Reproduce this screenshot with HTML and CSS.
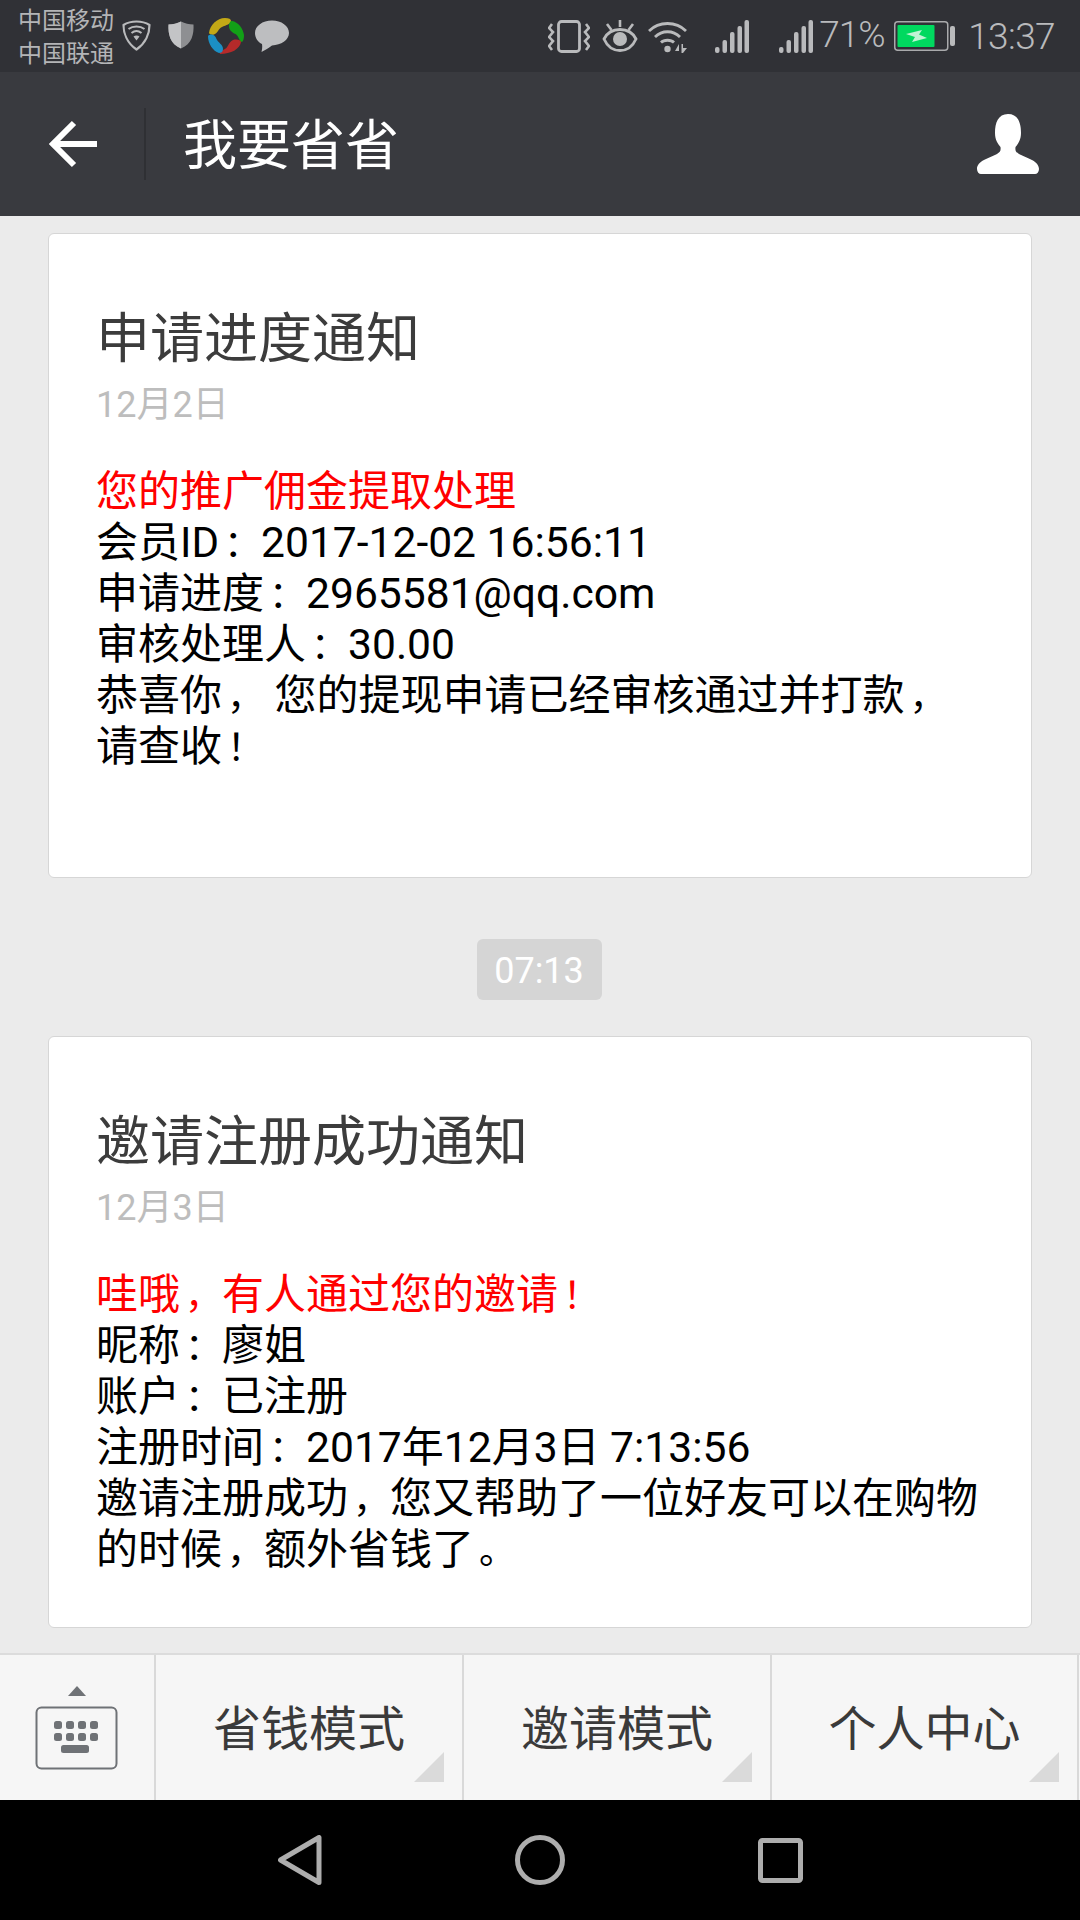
FILE: index.html
```html
<!DOCTYPE html>
<html lang="zh-CN">
<head>
<meta charset="utf-8">
<title>我要省省</title>
<link rel="stylesheet" href="styles.css">
</head>
<body>
<div class="phone">
  <div class="status">
    <div class="carriers"><span>中国移动</span><span>中国联通</span></div>
    <svg class="ic-guard" viewBox="0 0 29 31"><path d="M14.5 1.5C19 1.5 23.500 2.500 27.500 5C27.500 13 24 23 14.500 29.500C5 23 1.500 13 1.500 5C5.500 2.500 10 1.500 14.500 1.500Z" fill="none" stroke="#b9babc" stroke-width="2.200"/><path d="M6.500 9C11 5.500 18 5.500 22.500 9M9.500 13C12.500 10.500 16.500 10.500 19.500 13" fill="none" stroke="#b9babc" stroke-width="2"/><path d="M11.500 16.500C13 15 16 15 17.500 16.500L14.500 20.500Z" fill="#b9babc"/></svg>
    <svg class="ic-shield" viewBox="0 0 26 28"><path d="M13 0.500C17 2.500 21 3.500 25.500 3.500C26 13 24 23 13 27.500C2 23 0 13 0.500 3.500C5 3.500 9 2.500 13 0.500Z" fill="#8e8f92"/><path d="M13 0.500C9 2.500 5 3.500 0.500 3.500C0 13 2 23 13 27.500Z" fill="#c3c4c6"/></svg>
    <svg class="ic-petals" viewBox="0 0 36 36"><path d="M1 15C2 7 9 0 17 0C21 0 23 1 23 3C23 6 18 7 14 9C10 11 10 15 6 16.500C4 17 1.500 16.500 1 15Z" fill="#c3a816"/><path d="M24 3C30 4 35 10 36 17C36 21 35 24 33.500 24C31 23 31 18 27.500 16C24 14.500 21 12 21 8C21 5 22 3 24 3Z" fill="#12a017"/><path d="M33 24C32 31 23 36 12 36C11 35 12 33 15 32C21 30 20 24 25 22C29 21 33 22 33 24Z" fill="#b52a2a"/><path d="M0 18C2 15.500 7 16 8.500 21C10 25 15 26 15 31C15 34 13 35 11 35C5 33 0 26 0 18Z" fill="#1b8fc4"/></svg>
    <svg class="ic-bubble" viewBox="0 0 34 32"><path d="M17 0.500C26.500 0.500 34 6 34 13C34 20 26 25 17 25.500C14 28 10 30 6.500 32C7 29.500 7.500 27 7 24C3 22 0 18 0 13C0 6 7.500 0.500 17 0.500Z" fill="#bdbec0"/></svg>
    <div class="status-spacer"></div>
    <svg class="ic-vibrate" viewBox="0 0 42 33"><rect x="10.500" y="1.500" width="21" height="30" rx="3" fill="none" stroke="#b9babc" stroke-width="2.800"/><path d="M4 4L1 8L5 12L1 17L5 21L1 26L4 30" fill="none" stroke="#b9babc" stroke-width="2.600"/><path d="M38 4L41 8L37 12L41 17L37 21L41 26L38 30" fill="none" stroke="#b9babc" stroke-width="2.600"/></svg>
    <svg class="ic-eye" viewBox="0 0 36 32"><path d="M2 19C6 11 12 9.500 18 9.500C24 9.500 30 11 34 19C30 28 24 30.500 18 30.500C12 30.500 6 28 2 19Z" fill="none" stroke="#b9babc" stroke-width="2.800"/><circle cx="18" cy="19" r="7" fill="#b9babc"/><path d="M18 0V7M5 4L9.500 10M31 4L26.500 10" stroke="#b9babc" stroke-width="2.600"/></svg>
    <svg class="ic-wifi" viewBox="0 0 39 33"><path d="M1 11C11 1 28 1 38 11M7 17C14 10 25 10 32 17M13 22.500C16 19.500 23 19.500 26 22.500" fill="none" stroke="#b9babc" stroke-width="2.800"/><circle cx="19.500" cy="29" r="3.200" fill="#b9babc"/><path d="M27 31L31 24V31ZM33.500 24H35V28H39L35 33H33.500Z" fill="#b9babc"/></svg>
    <svg class="ic-signal" viewBox="0 0 34 33"><rect x="0" y="27" width="4.500" height="6" rx="2" fill="#b9babc"/><rect x="7.500" y="20" width="4.500" height="13" rx="2" fill="#b9babc"/><rect x="15" y="12" width="4.500" height="21" rx="2" fill="#b9babc"/><rect x="22.500" y="6" width="4.500" height="27" rx="2" fill="#b9babc"/><rect x="29.500" y="0" width="4.500" height="33" rx="2" fill="#b9babc"/></svg>
    <svg class="ic-signal ic-signal2" viewBox="0 0 34 33"><rect x="0" y="27" width="4.500" height="6" rx="2" fill="#b9babc"/><rect x="7.500" y="20" width="4.500" height="13" rx="2" fill="#b9babc"/><rect x="15" y="12" width="4.500" height="21" rx="2" fill="#b9babc"/><rect x="22.500" y="6" width="4.500" height="27" rx="2" fill="#b9babc"/><rect x="29.500" y="0" width="4.500" height="33" rx="2" fill="#b9babc"/></svg>
    <span class="pct">71%</span>
    <svg class="ic-battery" viewBox="0 0 61 30"><rect x="0.750" y="0.750" width="53" height="28.500" rx="3" fill="none" stroke="#a9aaac" stroke-width="1.500"/><rect x="3.500" y="4" width="37" height="22" rx="1" fill="#00d95f"/><path d="M12 13L28 9L25 13.500L33 17L18 21L21 16Z" fill="#bff3d4"/><rect x="56" y="5" width="5" height="20" rx="2" fill="#b9babc"/></svg>
    <span class="clock">13:37</span>
  </div>

  <header class="bar">
    <svg class="ic-back" viewBox="0 0 48 48"><path d="M25 3L4 24L25 45M4 24H48" fill="none" stroke="#fff" stroke-width="6"/></svg>
    <div class="bar-divider"></div>
    <h1 class="bar-title">我要省省</h1>
    <svg class="ic-person" viewBox="0 0 62 60"><path d="M31 0C41 0 44 9 44 19C44 26 41 30 38.500 33C38 37 39 38 42 40C50 44 62 47 62 55C62 58 60 60 58 60H4C2 60 0 58 0 55C0 47 12 44 20 40C23 38 24 37 23.500 33C21 30 18 26 18 19C18 9 21 0 31 0Z" fill="#fff"/></svg>
  </header>

  <main class="feed">
    <article class="card card-a">
      <h2 class="card-title">申请进度通知</h2>
      <div class="card-date">12月2日</div>
      <div class="card-body">
        <div class="red">您的推广佣金提取处理</div>
        <div>会员ID<span class="pu">：</span><span class="num">2017-12-02 16:56:11</span></div>
        <div>申请进度<span class="pu">：</span><span class="num">2965581@qq.com</span></div>
        <div>审核处理人<span class="pu">：</span><span class="num">30.00</span></div>
        <div>恭喜你<span class="pu">，</span> 您的提现申请已经审核通过并打款<span class="pu">，</span>请查收<span class="pu">！</span></div>
      </div>
    </article>
    <div class="chip">07:13</div>
    <article class="card card-b">
      <h2 class="card-title">邀请注册成功通知</h2>
      <div class="card-date">12月3日</div>
      <div class="card-body">
        <div class="red">哇哦<span class="pu">，</span>有人通过您的邀请<span class="pu">！</span></div>
        <div>昵称<span class="pu">：</span>廖姐</div>
        <div>账户<span class="pu">：</span>已注册</div>
        <div>注册时间<span class="pu">：</span><span class="num">2017</span>年<span class="num">12</span>月<span class="num">3</span>日 <span class="num">7:13:56</span></div>
        <div>邀请注册成功<span class="pu">，</span>您又帮助了一位好友可以在购物的时候<span class="pu">，</span>额外省钱了<span class="pu">。</span></div>
      </div>
    </article>
  </main>

  <nav class="menu">
    <div class="kbd">
      <svg class="ic-kbd" viewBox="0 0 84 84"><path d="M33 11L42 1L51 11Z" fill="#6f7276"/><rect x="1.500" y="22.500" width="80" height="61" rx="5" fill="none" stroke="#6f7276" stroke-width="2"/><g fill="#6f7276"><rect x="19" y="36" width="8" height="8" rx="2.500"/><rect x="31" y="36" width="8" height="8" rx="2.500"/><rect x="43" y="36" width="8" height="8" rx="2.500"/><rect x="55" y="36" width="8" height="8" rx="2.500"/><rect x="19" y="48" width="8" height="8" rx="2.500"/><rect x="31" y="48" width="8" height="8" rx="2.500"/><rect x="43" y="48" width="8" height="8" rx="2.500"/><rect x="55" y="48" width="8" height="8" rx="2.500"/><rect x="26" y="60" width="28" height="8" rx="2.500"/></g></svg>
    </div>
    <div class="tab">省钱模式</div>
    <div class="tab">邀请模式</div>
    <div class="tab tab-last">个人中心</div>
  </nav>

  <footer class="nav">
    <svg class="ic-nav-back" viewBox="0 0 44 50"><path d="M2.500 25L41 2.500V47.500Z" fill="none" stroke="#adadad" stroke-width="5" stroke-linejoin="round"/></svg>
    <svg class="ic-nav-home" viewBox="0 0 50 50"><circle cx="25" cy="25" r="22.500" fill="none" stroke="#adadad" stroke-width="5"/></svg>
    <svg class="ic-nav-recent" viewBox="0 0 45 45"><rect x="2.500" y="2.500" width="40" height="40" rx="2" fill="none" stroke="#adadad" stroke-width="5"/></svg>
  </footer>
</div>
</body>
</html>
```

FILE: styles.css
```css
* { box-sizing: border-box; }
html, body { margin: 0; padding: 0; }
body { width: 1080px; height: 1920px; overflow: hidden; font-family: Roboto, "Noto Sans CJK SC", sans-serif; }
.phone { width: 1080px; height: 1920px; display: flex; flex-direction: column; background: #ebebeb; }

.status { height: 72px; flex: none; background: #303136; display: flex; align-items: center; padding-left: 18px; color: #b9babc; }
.carriers { display: flex; flex-direction: column; font-size: 24px; line-height: 33px; width: 104px; flex: none; color: #b4b5b7; padding-top: 4px; }
.status svg { flex: none; display: block; }
.ic-guard { width: 29px; height: 31px; margin-top: -1px; }
.ic-shield { width: 26px; height: 28px; margin-left: 17px; margin-top: -3px; }
.ic-petals { width: 36px; height: 36px; margin-left: 14px; }
.ic-bubble { width: 34px; height: 32px; margin-left: 11px; }
.status-spacer { flex: 1; }
.ic-vibrate { width: 42px; height: 33px; }
.ic-eye { width: 36px; height: 32px; margin-left: 12px; }
.ic-wifi { width: 39px; height: 33px; margin-left: 10px; }
.ic-signal { width: 34px; height: 33px; margin-left: 28px; }
.status .ic-signal2 { margin-left: 30px; }
.pct { font-size: 37px; font-weight: 300; margin-left: 6px; width: 72px; flex: none; position: relative; top: -2px; letter-spacing: -1px; }
.ic-battery { width: 61px; height: 30px; margin-left: 3px; }
.clock { font-size: 37px; font-weight: 300; margin-left: 13px; margin-right: 25px; letter-spacing: -0.600px; }

.bar { height: 144px; flex: none; background: #393a3f; display: flex; align-items: center; }
.ic-back { width: 48px; height: 48px; margin-left: 49px; flex: none; }
.bar-divider { width: 2px; height: 72px; background: #2f3034; margin-left: 47px; flex: none; }
.bar-title { margin: 6px 0 0 37px; font-size: 54px; line-height: 64px; font-weight: 400; color: #fff; flex: 1; }
.ic-person { width: 62px; height: 60px; margin-right: 41px; flex: none; }

.feed { flex: 1; min-height: 0; overflow: hidden; padding: 17px 48px 0; display: flex; flex-direction: column; align-items: stretch; }
.card { background: #fff; border: 1px solid #d6d6d6; border-radius: 6px; padding: 70px 47px 0 47px; flex: none; }
.card-a { height: 645px; }
.card-b { height: 592px; }
.card-title { margin: 0; font-size: 54px; line-height: 72px; font-weight: 400; color: #3c3c3c; }
.card-date { font-size: 36px; line-height: 46px; color: #bdbdbd; margin-top: 6px; }
.card-body { margin-top: 38px; font-size: 42px; line-height: 51px; color: #000; }
.num { font-size: 42.600px; line-height: 0; }
.pu { font-size: 37px; line-height: 0; margin-left: 5px; }
.red { color: #ff0000; }
.chip { align-self: center; width: 125px; height: 61px; margin: 61px 2px 36px 0; padding-top: 3px; border-radius: 6px; background: #d5d5d5; color: #fff; font-size: 36px; display: flex; align-items: center; justify-content: center; }

.menu { height: 147px; flex: none; display: grid; grid-template-columns: 154px 308px 308px 309px; background: #f6f6f6; border-top: 2px solid #dcdcdc; }
.kbd { display: flex; align-items: center; justify-content: center; }
.ic-kbd { width: 84px; height: 84px; overflow: visible; margin-top: -2px; }
.tab { position: relative; border-left: 2px solid #d9d9d9; display: flex; align-items: center; justify-content: center; font-size: 48px; color: #3a3a3a; padding-bottom: 5px; }
.tab::after { content: ""; position: absolute; right: 18px; bottom: 18px; width: 30px; height: 30px; background: #dadada; clip-path: polygon(100% 0, 100% 100%, 0 100%); }
.tab-last { border-right: 2px solid #d9d9d9; }

.nav { height: 120px; flex: none; background: #000; display: flex; align-items: center; padding-left: 278px; }
.ic-nav-back { width: 44px; height: 50px; flex: none; }
.ic-nav-home { width: 50px; height: 50px; margin-left: 193px; flex: none; }
.ic-nav-recent { width: 45px; height: 45px; margin-left: 193px; flex: none; }
```
